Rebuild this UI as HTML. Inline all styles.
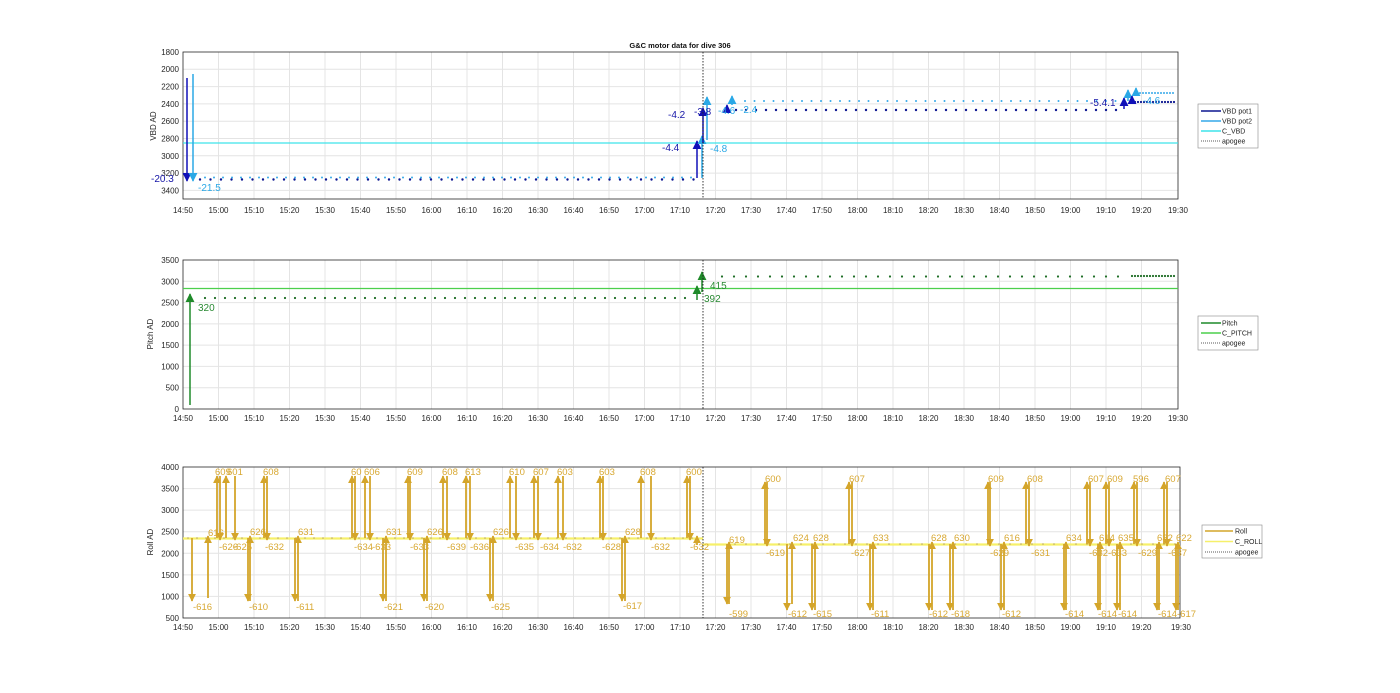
<!DOCTYPE html>
<html><head><meta charset="utf-8"><style>
html,body{margin:0;padding:0;background:#fff;width:1400px;height:693px;overflow:hidden}
svg{display:block;font-family:"Liberation Sans",Arial,sans-serif}
.tk{font-size:8px;fill:#262626}
.grid line{stroke:#e4e4e4;stroke-width:1}
.lg{font-size:7px;fill:#222}
.rl{font-size:9.5px;fill:#d8a832}
</style></head><body>
<svg width="1400" height="693" viewBox="0 0 1400 693" xmlns="http://www.w3.org/2000/svg">
<defs>
<marker id="mdb" markerWidth="6" markerHeight="6" refX="3" refY="5" orient="auto-start-reverse" markerUnits="userSpaceOnUse" viewBox="0 0 6 6"><path d="M0,6 L3,0 L6,6 Z" fill="#0a10b0" transform="rotate(90 3 3)"/></marker>
<marker id="A" viewBox="0 0 10 10" refX="9" refY="5" markerWidth="8" markerHeight="8" orient="auto" markerUnits="userSpaceOnUse"><path d="M0,0 L10,5 L0,10 Z" fill="#d4a52a"/></marker>
<marker id="B" viewBox="0 0 10 10" refX="9" refY="5" markerWidth="9" markerHeight="9" orient="auto" markerUnits="userSpaceOnUse"><path d="M0,0 L10,5 L0,10 Z" fill="#1010b8"/></marker>
<marker id="C" viewBox="0 0 10 10" refX="9" refY="5" markerWidth="9" markerHeight="9" orient="auto" markerUnits="userSpaceOnUse"><path d="M0,0 L10,5 L0,10 Z" fill="#2aa8e6"/></marker>
<marker id="G" viewBox="0 0 10 10" refX="9" refY="5" markerWidth="9" markerHeight="9" orient="auto" markerUnits="userSpaceOnUse"><path d="M0,0 L10,5 L0,10 Z" fill="#1f8a2a"/></marker>
</defs>

<!-- ============ PLOT 1 ============ -->
<text x="680" y="48" text-anchor="middle" style="font-size:7.5px;font-weight:bold;fill:#111">G&amp;C motor data for dive 306</text>
<g class="grid">
<line x1="218.5" y1="52" x2="218.5" y2="199"/><line x1="254" y1="52" x2="254" y2="199"/><line x1="289.5" y1="52" x2="289.5" y2="199"/><line x1="325" y1="52" x2="325" y2="199"/><line x1="360.5" y1="52" x2="360.5" y2="199"/><line x1="396" y1="52" x2="396" y2="199"/><line x1="431.5" y1="52" x2="431.5" y2="199"/><line x1="467" y1="52" x2="467" y2="199"/><line x1="502.5" y1="52" x2="502.5" y2="199"/><line x1="538" y1="52" x2="538" y2="199"/><line x1="573.5" y1="52" x2="573.5" y2="199"/><line x1="609" y1="52" x2="609" y2="199"/><line x1="644.5" y1="52" x2="644.5" y2="199"/><line x1="680" y1="52" x2="680" y2="199"/><line x1="715.5" y1="52" x2="715.5" y2="199"/><line x1="751" y1="52" x2="751" y2="199"/><line x1="786.5" y1="52" x2="786.5" y2="199"/><line x1="822" y1="52" x2="822" y2="199"/><line x1="857.5" y1="52" x2="857.5" y2="199"/><line x1="893" y1="52" x2="893" y2="199"/><line x1="928.5" y1="52" x2="928.5" y2="199"/><line x1="964" y1="52" x2="964" y2="199"/><line x1="999.5" y1="52" x2="999.5" y2="199"/><line x1="1035" y1="52" x2="1035" y2="199"/><line x1="1070.5" y1="52" x2="1070.5" y2="199"/><line x1="1106" y1="52" x2="1106" y2="199"/><line x1="1141.5" y1="52" x2="1141.5" y2="199"/>
<line x1="183" y1="69.3" x2="1178" y2="69.3"/><line x1="183" y1="86.6" x2="1178" y2="86.6"/><line x1="183" y1="103.9" x2="1178" y2="103.9"/><line x1="183" y1="121.2" x2="1178" y2="121.2"/><line x1="183" y1="138.5" x2="1178" y2="138.5"/><line x1="183" y1="155.8" x2="1178" y2="155.8"/><line x1="183" y1="173.1" x2="1178" y2="173.1"/><line x1="183" y1="190.4" x2="1178" y2="190.4"/>
</g>
<rect x="183" y="52" width="995" height="147" fill="none" stroke="#262626" stroke-width="0.8"/>
<g class="tk" text-anchor="end">
<text x="179" y="55">1800</text><text x="179" y="72">2000</text><text x="179" y="89.5">2200</text><text x="179" y="107">2400</text><text x="179" y="124">2600</text><text x="179" y="141.5">2800</text><text x="179" y="159">3000</text><text x="179" y="176">3200</text><text x="179" y="193.5">3400</text>
</g>
<text transform="translate(156,126) rotate(-90)" text-anchor="middle" class="tk">VBD AD</text>
<g class="tk" text-anchor="middle">
<text x="183" y="213">14:50</text><text x="218.5" y="213">15:00</text><text x="254" y="213">15:10</text><text x="289.5" y="213">15:20</text><text x="325" y="213">15:30</text><text x="360.5" y="213">15:40</text><text x="396" y="213">15:50</text><text x="431.5" y="213">16:00</text><text x="467" y="213">16:10</text><text x="502.5" y="213">16:20</text><text x="538" y="213">16:30</text><text x="573.5" y="213">16:40</text><text x="609" y="213">16:50</text><text x="644.5" y="213">17:00</text><text x="680" y="213">17:10</text><text x="715.5" y="213">17:20</text><text x="751" y="213">17:30</text><text x="786.5" y="213">17:40</text><text x="822" y="213">17:50</text><text x="857.5" y="213">18:00</text><text x="893" y="213">18:10</text><text x="928.5" y="213">18:20</text><text x="964" y="213">18:30</text><text x="999.5" y="213">18:40</text><text x="1035" y="213">18:50</text><text x="1070.5" y="213">19:00</text><text x="1106" y="213">19:10</text><text x="1141.5" y="213">19:20</text><text x="1178" y="213">19:30</text>
</g>
<line x1="183" y1="143" x2="1178" y2="143" stroke="#3fe3ea" stroke-width="1.3"/>
<!-- dots -->
<line x1="200" y1="179.5" x2="695" y2="179.5" stroke="#0c1690" stroke-width="2.4" stroke-linecap="round" stroke-dasharray="0 10.5"/>
<line x1="205" y1="177.5" x2="692" y2="177.5" stroke="#35a8e8" stroke-width="2" stroke-linecap="round" stroke-dasharray="0 9"/>
<line x1="736" y1="110" x2="1120" y2="110" stroke="#0c1690" stroke-width="2.4" stroke-linecap="round" stroke-dasharray="0 10"/>
<line x1="745" y1="101" x2="1120" y2="101" stroke="#35a8e8" stroke-width="2" stroke-linecap="round" stroke-dasharray="0 9.5"/>
<line x1="1135" y1="102" x2="1176" y2="102" stroke="#0c1690" stroke-width="2.2" stroke-linecap="round" stroke-dasharray="0 3"/>
<line x1="1140" y1="93" x2="1176" y2="93" stroke="#35a8e8" stroke-width="2" stroke-linecap="round" stroke-dasharray="0 3"/>
<!-- arrows -->
<line x1="187" y1="78" x2="187" y2="181" stroke="#1010b8" stroke-width="1.5" marker-end="url(#B)"/>
<line x1="193" y1="74" x2="193" y2="181" stroke="#2aa8e6" stroke-width="1.5" marker-end="url(#C)"/>
<line x1="697" y1="178" x2="697" y2="141" stroke="#1010b8" stroke-width="1.5" marker-end="url(#B)"/>
<line x1="702" y1="178" x2="702" y2="136" stroke="#2aa8e6" stroke-width="1.5" marker-end="url(#C)"/>
<line x1="703" y1="143" x2="703" y2="108" stroke="#1010b8" stroke-width="1.5" marker-end="url(#B)"/>
<line x1="707" y1="140" x2="707" y2="97" stroke="#2aa8e6" stroke-width="1.5" marker-end="url(#C)"/>
<line x1="727" y1="112" x2="727" y2="105" stroke="#1010b8" stroke-width="1.5" marker-end="url(#B)"/>
<line x1="732" y1="105" x2="732" y2="96" stroke="#2aa8e6" stroke-width="1.5" marker-end="url(#C)"/>
<line x1="1124" y1="109" x2="1124" y2="98" stroke="#1010b8" stroke-width="1.5" marker-end="url(#B)"/>
<line x1="1128" y1="101" x2="1128" y2="90" stroke="#2aa8e6" stroke-width="1.5" marker-end="url(#C)"/>
<line x1="1132" y1="103" x2="1132" y2="96" stroke="#1010b8" stroke-width="1.5" marker-end="url(#B)"/>
<line x1="1136" y1="96" x2="1136" y2="88" stroke="#2aa8e6" stroke-width="1.5" marker-end="url(#C)"/>
<g style="font-size:10px">
<text x="151" y="182" fill="#1616a8">-20.3</text><text x="198" y="191" fill="#2aa8e6">-21.5</text>
<text x="662" y="151" fill="#1616a8">-4.4</text><text x="710" y="152" fill="#2aa8e6">-4.8</text>
<text x="668" y="118" fill="#1616a8">-4.2</text><text x="694" y="115" fill="#1616a8">-3.8</text>
<text x="718" y="114" fill="#2aa8e6">-4.6</text><text x="740" y="113" fill="#2aa8e6">-2.4</text>
<text x="1090" y="106" fill="#1616a8">-5.4.1</text><text x="1143" y="104" fill="#2aa8e6">-4.6</text>
</g>
<line x1="703" y1="52" x2="703" y2="199" stroke="#222" stroke-width="0.9" stroke-dasharray="1.5 1.5"/>
<g>
<rect x="1198" y="104" width="60" height="44" fill="#fff" stroke="#888" stroke-width="0.6"/>
<line x1="1201" y1="111" x2="1221" y2="111" stroke="#0c1690" stroke-width="1.5"/><text x="1222" y="113.5" class="lg">VBD pot1</text>
<line x1="1201" y1="121" x2="1221" y2="121" stroke="#35a8e8" stroke-width="1.5"/><text x="1222" y="123.5" class="lg">VBD pot2</text>
<line x1="1201" y1="131" x2="1221" y2="131" stroke="#3fe3ea" stroke-width="1.5"/><text x="1222" y="133.5" class="lg">C_VBD</text>
<line x1="1201" y1="141" x2="1221" y2="141" stroke="#222" stroke-width="0.8" stroke-dasharray="1 1"/><text x="1222" y="143.5" class="lg">apogee</text>
</g>

<!-- ============ PLOT 2 ============ -->
<g class="grid">
<line x1="218.5" y1="260" x2="218.5" y2="409"/><line x1="254" y1="260" x2="254" y2="409"/><line x1="289.5" y1="260" x2="289.5" y2="409"/><line x1="325" y1="260" x2="325" y2="409"/><line x1="360.5" y1="260" x2="360.5" y2="409"/><line x1="396" y1="260" x2="396" y2="409"/><line x1="431.5" y1="260" x2="431.5" y2="409"/><line x1="467" y1="260" x2="467" y2="409"/><line x1="502.5" y1="260" x2="502.5" y2="409"/><line x1="538" y1="260" x2="538" y2="409"/><line x1="573.5" y1="260" x2="573.5" y2="409"/><line x1="609" y1="260" x2="609" y2="409"/><line x1="644.5" y1="260" x2="644.5" y2="409"/><line x1="680" y1="260" x2="680" y2="409"/><line x1="715.5" y1="260" x2="715.5" y2="409"/><line x1="751" y1="260" x2="751" y2="409"/><line x1="786.5" y1="260" x2="786.5" y2="409"/><line x1="822" y1="260" x2="822" y2="409"/><line x1="857.5" y1="260" x2="857.5" y2="409"/><line x1="893" y1="260" x2="893" y2="409"/><line x1="928.5" y1="260" x2="928.5" y2="409"/><line x1="964" y1="260" x2="964" y2="409"/><line x1="999.5" y1="260" x2="999.5" y2="409"/><line x1="1035" y1="260" x2="1035" y2="409"/><line x1="1070.5" y1="260" x2="1070.5" y2="409"/><line x1="1106" y1="260" x2="1106" y2="409"/><line x1="1141.5" y1="260" x2="1141.5" y2="409"/>
<line x1="183" y1="281.3" x2="1178" y2="281.3"/><line x1="183" y1="302.6" x2="1178" y2="302.6"/><line x1="183" y1="323.9" x2="1178" y2="323.9"/><line x1="183" y1="345.1" x2="1178" y2="345.1"/><line x1="183" y1="366.4" x2="1178" y2="366.4"/><line x1="183" y1="387.7" x2="1178" y2="387.7"/>
</g>
<rect x="183" y="260" width="995" height="149" fill="none" stroke="#262626" stroke-width="0.8"/>
<g class="tk" text-anchor="end">
<text x="179" y="263">3500</text><text x="179" y="284.3">3000</text><text x="179" y="305.6">2500</text><text x="179" y="326.9">2000</text><text x="179" y="348.1">1500</text><text x="179" y="369.4">1000</text><text x="179" y="390.7">500</text><text x="179" y="412">0</text>
</g>
<text transform="translate(153,334) rotate(-90)" text-anchor="middle" class="tk">Pitch AD</text>
<g class="tk" text-anchor="middle">
<text x="183" y="421">14:50</text><text x="218.5" y="421">15:00</text><text x="254" y="421">15:10</text><text x="289.5" y="421">15:20</text><text x="325" y="421">15:30</text><text x="360.5" y="421">15:40</text><text x="396" y="421">15:50</text><text x="431.5" y="421">16:00</text><text x="467" y="421">16:10</text><text x="502.5" y="421">16:20</text><text x="538" y="421">16:30</text><text x="573.5" y="421">16:40</text><text x="609" y="421">16:50</text><text x="644.5" y="421">17:00</text><text x="680" y="421">17:10</text><text x="715.5" y="421">17:20</text><text x="751" y="421">17:30</text><text x="786.5" y="421">17:40</text><text x="822" y="421">17:50</text><text x="857.5" y="421">18:00</text><text x="893" y="421">18:10</text><text x="928.5" y="421">18:20</text><text x="964" y="421">18:30</text><text x="999.5" y="421">18:40</text><text x="1035" y="421">18:50</text><text x="1070.5" y="421">19:00</text><text x="1106" y="421">19:10</text><text x="1141.5" y="421">19:20</text><text x="1178" y="421">19:30</text>
</g>
<line x1="183" y1="288.5" x2="1178" y2="288.5" stroke="#4ccf4c" stroke-width="1.3"/>
<line x1="205" y1="298" x2="690" y2="298" stroke="#1f6e26" stroke-width="2.2" stroke-linecap="round" stroke-dasharray="0 10"/>
<line x1="722" y1="276.5" x2="1130" y2="276.5" stroke="#1f6e26" stroke-width="2.2" stroke-linecap="round" stroke-dasharray="0 12"/>
<line x1="1132" y1="276" x2="1176" y2="276" stroke="#1f6e26" stroke-width="2.2" stroke-linecap="round" stroke-dasharray="0 3"/>
<line x1="190" y1="405" x2="190" y2="294" stroke="#1f8a2a" stroke-width="1.5" marker-end="url(#G)"/>
<line x1="697" y1="300" x2="697" y2="286" stroke="#1f8a2a" stroke-width="1.5" marker-end="url(#G)"/>
<line x1="702" y1="292" x2="702" y2="272" stroke="#1f8a2a" stroke-width="1.5" marker-end="url(#G)"/>
<g style="font-size:10px" fill="#2a8a34">
<text x="198" y="311">320</text><text x="704" y="302">392</text><text x="710" y="289">415</text>
</g>
<line x1="703" y1="260" x2="703" y2="409" stroke="#222" stroke-width="0.9" stroke-dasharray="1.5 1.5"/>
<g>
<rect x="1198" y="316" width="60" height="34" fill="#fff" stroke="#888" stroke-width="0.6"/>
<line x1="1201" y1="323" x2="1221" y2="323" stroke="#1f8a2a" stroke-width="1.5"/><text x="1222" y="325.5" class="lg">Pitch</text>
<line x1="1201" y1="333" x2="1221" y2="333" stroke="#4ccf4c" stroke-width="1.5"/><text x="1222" y="335.5" class="lg">C_PITCH</text>
<line x1="1201" y1="343" x2="1221" y2="343" stroke="#222" stroke-width="0.8" stroke-dasharray="1 1"/><text x="1222" y="345.5" class="lg">apogee</text>
</g>

<!-- ============ PLOT 3 ============ -->
<g class="grid">
<line x1="218.5" y1="467" x2="218.5" y2="618"/><line x1="254" y1="467" x2="254" y2="618"/><line x1="289.5" y1="467" x2="289.5" y2="618"/><line x1="325" y1="467" x2="325" y2="618"/><line x1="360.5" y1="467" x2="360.5" y2="618"/><line x1="396" y1="467" x2="396" y2="618"/><line x1="431.5" y1="467" x2="431.5" y2="618"/><line x1="467" y1="467" x2="467" y2="618"/><line x1="502.5" y1="467" x2="502.5" y2="618"/><line x1="538" y1="467" x2="538" y2="618"/><line x1="573.5" y1="467" x2="573.5" y2="618"/><line x1="609" y1="467" x2="609" y2="618"/><line x1="644.5" y1="467" x2="644.5" y2="618"/><line x1="680" y1="467" x2="680" y2="618"/><line x1="715.5" y1="467" x2="715.5" y2="618"/><line x1="751" y1="467" x2="751" y2="618"/><line x1="786.5" y1="467" x2="786.5" y2="618"/><line x1="822" y1="467" x2="822" y2="618"/><line x1="857.5" y1="467" x2="857.5" y2="618"/><line x1="893" y1="467" x2="893" y2="618"/><line x1="928.5" y1="467" x2="928.5" y2="618"/><line x1="964" y1="467" x2="964" y2="618"/><line x1="999.5" y1="467" x2="999.5" y2="618"/><line x1="1035" y1="467" x2="1035" y2="618"/><line x1="1070.5" y1="467" x2="1070.5" y2="618"/><line x1="1106" y1="467" x2="1106" y2="618"/><line x1="1141.5" y1="467" x2="1141.5" y2="618"/>
<line x1="183" y1="488.6" x2="1180" y2="488.6"/><line x1="183" y1="510.1" x2="1180" y2="510.1"/><line x1="183" y1="531.7" x2="1180" y2="531.7"/><line x1="183" y1="553.3" x2="1180" y2="553.3"/><line x1="183" y1="574.9" x2="1180" y2="574.9"/><line x1="183" y1="596.4" x2="1180" y2="596.4"/>
</g>
<rect x="183" y="467" width="997" height="151" fill="none" stroke="#262626" stroke-width="0.8"/>
<g class="tk" text-anchor="end">
<text x="179" y="470">4000</text><text x="179" y="491.6">3500</text><text x="179" y="513.1">3000</text><text x="179" y="534.7">2500</text><text x="179" y="556.3">2000</text><text x="179" y="577.9">1500</text><text x="179" y="599.4">1000</text><text x="179" y="621">500</text>
</g>
<text transform="translate(153,542) rotate(-90)" text-anchor="middle" class="tk">Roll AD</text>
<g class="tk" text-anchor="middle">
<text x="183" y="630">14:50</text><text x="218.5" y="630">15:00</text><text x="254" y="630">15:10</text><text x="289.5" y="630">15:20</text><text x="325" y="630">15:30</text><text x="360.5" y="630">15:40</text><text x="396" y="630">15:50</text><text x="431.5" y="630">16:00</text><text x="467" y="630">16:10</text><text x="502.5" y="630">16:20</text><text x="538" y="630">16:30</text><text x="573.5" y="630">16:40</text><text x="609" y="630">16:50</text><text x="644.5" y="630">17:00</text><text x="680" y="630">17:10</text><text x="715.5" y="630">17:20</text><text x="751" y="630">17:30</text><text x="786.5" y="630">17:40</text><text x="822" y="630">17:50</text><text x="857.5" y="630">18:00</text><text x="893" y="630">18:10</text><text x="928.5" y="630">18:20</text><text x="964" y="630">18:30</text><text x="999.5" y="630">18:40</text><text x="1035" y="630">18:50</text><text x="1070.5" y="630">19:00</text><text x="1106" y="630">19:10</text><text x="1141.5" y="630">19:20</text><text x="1181" y="630">19:30</text>
</g>
<line x1="183" y1="538.5" x2="703" y2="538.5" stroke="#f6f06a" stroke-width="2.2"/>
<line x1="703" y1="544.5" x2="1180" y2="544.5" stroke="#f6f06a" stroke-width="2.2"/>
<line x1="188" y1="538" x2="700" y2="538" stroke="#b9a46a" stroke-width="1.6" stroke-linecap="round" stroke-dasharray="0 9"/>
<line x1="735" y1="544" x2="1178" y2="544" stroke="#b9a46a" stroke-width="1.6" stroke-linecap="round" stroke-dasharray="0 11"/>
<g stroke="#d4a52a" stroke-width="1.8" marker-end="url(#A)">
<!-- big drops to ~900 -->
<line x1="192" y1="538" x2="192" y2="601"/><line x1="248" y1="538" x2="248" y2="601"/><line x1="295" y1="538" x2="295" y2="601"/><line x1="383" y1="538" x2="383" y2="601"/><line x1="424" y1="538" x2="424" y2="601"/><line x1="490" y1="538" x2="490" y2="601"/><line x1="622" y1="538" x2="622" y2="601"/>
<line x1="727" y1="544" x2="727" y2="604"/><line x1="787" y1="544" x2="787" y2="610"/><line x1="812" y1="544" x2="812" y2="610"/><line x1="870" y1="544" x2="870" y2="610"/><line x1="929" y1="544" x2="929" y2="610"/><line x1="950" y1="544" x2="950" y2="610"/><line x1="1001" y1="544" x2="1001" y2="610"/><line x1="1064" y1="544" x2="1064" y2="610"/><line x1="1098" y1="544" x2="1098" y2="610"/><line x1="1117" y1="544" x2="1117" y2="610"/><line x1="1157" y1="544" x2="1157" y2="610"/><line x1="1176" y1="544" x2="1176" y2="610"/>
<!-- up from low -->
<line x1="208" y1="598" x2="208" y2="536"/><line x1="250" y1="601" x2="250" y2="536"/><line x1="298" y1="601" x2="298" y2="536"/><line x1="386" y1="601" x2="386" y2="536"/><line x1="427" y1="601" x2="427" y2="536"/><line x1="493" y1="601" x2="493" y2="536"/><line x1="625" y1="601" x2="625" y2="536"/>
<line x1="729" y1="604" x2="729" y2="542"/><line x1="792" y1="604" x2="792" y2="542"/><line x1="815" y1="610" x2="815" y2="542"/><line x1="873" y1="610" x2="873" y2="542"/><line x1="932" y1="610" x2="932" y2="542"/><line x1="953" y1="610" x2="953" y2="542"/><line x1="1004" y1="610" x2="1004" y2="542"/><line x1="1066" y1="610" x2="1066" y2="542"/><line x1="1100" y1="610" x2="1100" y2="542"/><line x1="1120" y1="610" x2="1120" y2="542"/><line x1="1159" y1="610" x2="1159" y2="542"/><line x1="1178" y1="610" x2="1178" y2="542"/>
<!-- up to ~3750 -->
<line x1="217" y1="538" x2="217" y2="476"/><line x1="226" y1="538" x2="226" y2="476"/><line x1="264" y1="538" x2="264" y2="476"/><line x1="352" y1="538" x2="352" y2="476"/><line x1="365" y1="538" x2="365" y2="476"/><line x1="408" y1="538" x2="408" y2="476"/><line x1="443" y1="538" x2="443" y2="476"/><line x1="466" y1="538" x2="466" y2="476"/><line x1="510" y1="538" x2="510" y2="476"/><line x1="534" y1="538" x2="534" y2="476"/><line x1="558" y1="538" x2="558" y2="476"/><line x1="600" y1="538" x2="600" y2="476"/><line x1="641" y1="538" x2="641" y2="476"/><line x1="687" y1="538" x2="687" y2="476"/>
<line x1="765" y1="544" x2="765" y2="482"/><line x1="849" y1="544" x2="849" y2="482"/><line x1="988" y1="544" x2="988" y2="482"/><line x1="1026" y1="544" x2="1026" y2="482"/><line x1="1087" y1="544" x2="1087" y2="482"/><line x1="1106" y1="544" x2="1106" y2="482"/><line x1="1134" y1="544" x2="1134" y2="482"/><line x1="1164" y1="544" x2="1164" y2="482"/>
<!-- down back -->
<line x1="220" y1="476" x2="220" y2="540"/><line x1="235" y1="476" x2="235" y2="540"/><line x1="267" y1="476" x2="267" y2="540"/><line x1="355" y1="476" x2="355" y2="540"/><line x1="370" y1="476" x2="370" y2="540"/><line x1="410" y1="476" x2="410" y2="540"/><line x1="447" y1="476" x2="447" y2="540"/><line x1="470" y1="476" x2="470" y2="540"/><line x1="516" y1="476" x2="516" y2="540"/><line x1="538" y1="476" x2="538" y2="540"/><line x1="563" y1="476" x2="563" y2="540"/><line x1="603" y1="476" x2="603" y2="540"/><line x1="651" y1="476" x2="651" y2="540"/><line x1="690" y1="476" x2="690" y2="540"/>
<line x1="767" y1="482" x2="767" y2="546"/><line x1="852" y1="482" x2="852" y2="546"/><line x1="990" y1="482" x2="990" y2="546"/><line x1="1029" y1="482" x2="1029" y2="546"/><line x1="1090" y1="482" x2="1090" y2="546"/><line x1="1109" y1="482" x2="1109" y2="546"/><line x1="1137" y1="482" x2="1137" y2="546"/><line x1="1167" y1="482" x2="1167" y2="546"/>
<line x1="697" y1="545" x2="697" y2="536"/>
</g>
<g class="rl">
<text x="193" y="610">-616</text><text x="249" y="610">-610</text><text x="296" y="610">-611</text><text x="384" y="610">-621</text><text x="425" y="610">-620</text><text x="491" y="610">-625</text><text x="623" y="609">-617</text>
<text x="729" y="617">-599</text><text x="788" y="617">-612</text><text x="813" y="617">-615</text><text x="871" y="617">-611</text><text x="929" y="617">-612</text><text x="951" y="617">-618</text><text x="1002" y="617">-612</text><text x="1065" y="617">-614</text><text x="1098" y="617">-614</text><text x="1118" y="617">-614</text><text x="1158" y="617">-614</text><text x="1177" y="617">-617</text>
<text x="208" y="536">616</text><text x="250" y="535">626</text><text x="298" y="535">631</text><text x="386" y="535">631</text><text x="427" y="535">626</text><text x="493" y="535">626</text><text x="625" y="535">628</text>
<text x="729" y="543">619</text><text x="793" y="541">624</text><text x="813" y="541">628</text><text x="873" y="541">633</text><text x="931" y="541">628</text><text x="954" y="541">630</text><text x="1004" y="541">616</text><text x="1066" y="541">634</text><text x="1099" y="541">614</text><text x="1118" y="541">635</text><text x="1157" y="541">632</text><text x="1176" y="541">622</text>
<text x="215" y="475">609</text><text x="227" y="475">601</text><text x="263" y="475">608</text><text x="351" y="475">60</text><text x="364" y="475">606</text><text x="407" y="475">609</text><text x="442" y="475">608</text><text x="465" y="475">613</text><text x="509" y="475">610</text><text x="533" y="475">607</text><text x="557" y="475">603</text><text x="599" y="475">603</text><text x="640" y="475">608</text><text x="686" y="475">600</text>
<text x="765" y="482">600</text><text x="849" y="482">607</text><text x="988" y="482">609</text><text x="1027" y="482">608</text><text x="1088" y="482">607</text><text x="1107" y="482">609</text><text x="1133" y="482">596</text><text x="1165" y="482">607</text>
<text x="219" y="550">-626</text><text x="233" y="550">-625</text><text x="265" y="550">-632</text><text x="354" y="550">-634</text><text x="372" y="550">-633</text><text x="410" y="550">-633</text><text x="447" y="550">-639</text><text x="470" y="550">-636</text><text x="515" y="550">-635</text><text x="540" y="550">-634</text><text x="563" y="550">-632</text><text x="602" y="550">-628</text><text x="651" y="550">-632</text><text x="690" y="550">-632</text>
<text x="766" y="556">-619</text><text x="851" y="556">-627</text><text x="990" y="556">-629</text><text x="1031" y="556">-631</text><text x="1089" y="556">-632</text><text x="1108" y="556">-633</text><text x="1138" y="556">-629</text><text x="1168" y="556">-637</text>
</g>
<line x1="703" y1="467" x2="703" y2="618" stroke="#222" stroke-width="0.9" stroke-dasharray="1.5 1.5"/>
<g>
<rect x="1202" y="525" width="60" height="33" fill="#fff" stroke="#888" stroke-width="0.6"/>
<line x1="1205" y1="531" x2="1233" y2="531" stroke="#d4a52a" stroke-width="1.5"/><text x="1235" y="533.5" class="lg">Roll</text>
<line x1="1205" y1="541.5" x2="1233" y2="541.5" stroke="#f6f06a" stroke-width="1.5"/><text x="1235" y="544" class="lg">C_ROLL</text>
<line x1="1205" y1="552" x2="1233" y2="552" stroke="#222" stroke-width="0.8" stroke-dasharray="1 1"/><text x="1235" y="554.5" class="lg">apogee</text>
</g>
</svg>
</body></html>
